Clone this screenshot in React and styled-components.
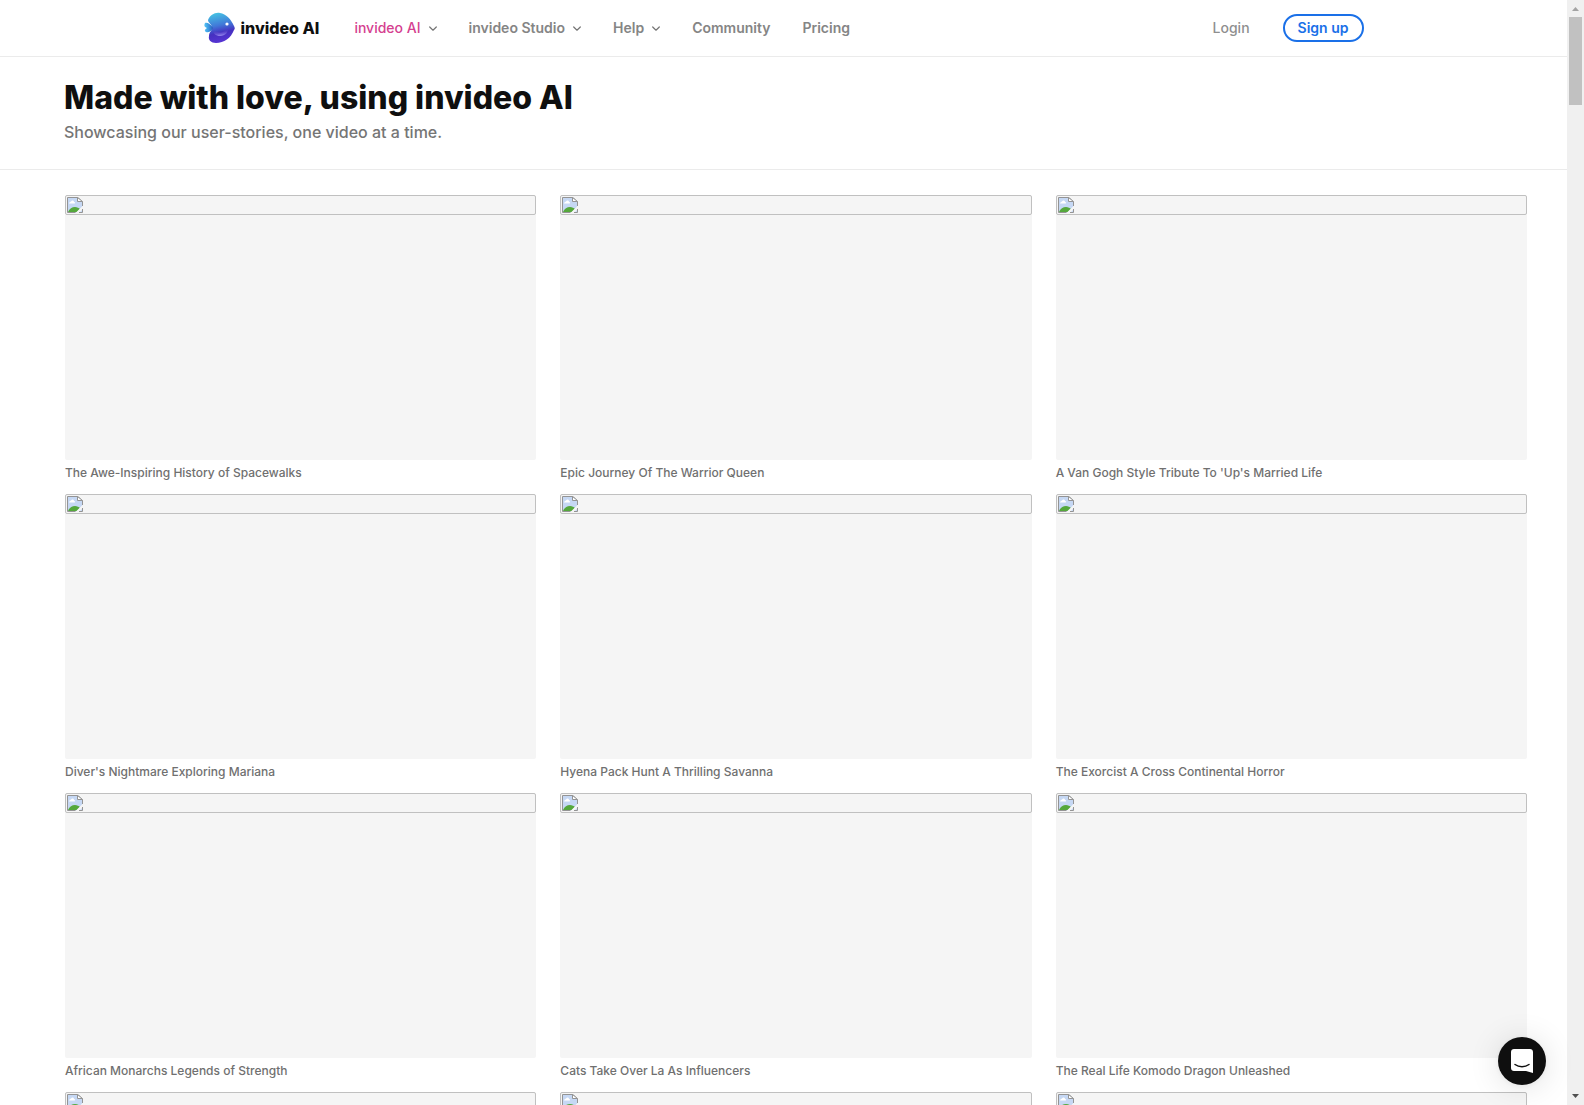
import styled, { createGlobalStyle } from "styled-components";

const menu = [
    { label: "invideo AI", drop: true, active: true },
    { label: "invideo Studio", drop: true },
    { label: "Help", drop: true },
    { label: "Community" },
    { label: "Pricing" },
];

const videos = [
    "The Awe-Inspiring History of Spacewalks",
    "Epic Journey Of The Warrior Queen",
    "A Van Gogh Style Tribute To 'Up's Married Life",
    "Diver's Nightmare Exploring Mariana",
    "Hyena Pack Hunt A Thrilling Savanna",
    "The Exorcist A Cross Continental Horror",
    "African Monarchs Legends of Strength",
    "Cats Take Over La As Influencers",
    "The Real Life Komodo Dragon Unleashed",
    "",
    "",
    "",
];

function FishLogo() {
    return (
        <svg width="31" height="32" viewBox="0 0 31 32" aria-hidden="true">
            <defs>
                <linearGradient id="body" x1="0.4" y1="0" x2="0.6" y2="1">
                    <stop offset="0" stopColor="#45bfe2" />
                    <stop offset="0.4" stopColor="#4178d8" />
                    <stop offset="0.65" stopColor="#4530c0" />
                    <stop offset="1" stopColor="#5a35d6" />
                </linearGradient>
                <linearGradient id="fin" x1="0.3" y1="0" x2="0.5" y2="1">
                    <stop offset="0.3" stopColor="#4530c0" stopOpacity="0" />
                    <stop offset="1" stopColor="#9a8df0" />
                </linearGradient>
                <linearGradient id="tail" x1="0" y1="0" x2="1" y2="0">
                    <stop offset="0" stopColor="#55c4f4" />
                    <stop offset="0.5" stopColor="#3b96e0" />
                    <stop offset="1" stopColor="#2b58b8" />
                </linearGradient>
            </defs>
            <path d="M4 8C6 3 11 0 16 1C22 2 27 7 30 14C31 16 31 17 30 18C27 26 20 31 12 31C7 31 4 28 5 24C5 20 8 19 8 16C8 12 4 11 4 8Z" fill="url(#body)" />
            <path d="M1 11C3 10 7 12 9 16C7 20 4 21 2 20C0 19 1 17 3 16C0 15 0 13 1 11Z" fill="url(#tail)" />
            <path d="M9 17C13 22 20 22 24 15C25 20 21 24 16 24C12 24 9 22 9 17Z" fill="url(#fin)" />
            <circle cx="23" cy="12" r="1.6" fill="#fff" />
        </svg>
    );
}

function Chevron() {
    return (
        <svg width="8" height="8" viewBox="0 0 8 8" fill="none" stroke="#757575" strokeWidth="1.2" strokeLinecap="round" strokeLinejoin="round" aria-hidden="true">
            <path d="M0.7 3L4 6.2L7.3 3" />
        </svg>
    );
}

function MissingImage() {
    return (
        <svg width="16" height="16" viewBox="0 0 16 16" aria-hidden="true">
            <path d="M0.5 0.5H11L15.5 5V15.5H0.5Z" fill="#c6d8f4" />
            <path d="M2 6.5C2 5 3.5 5 4 4.5C5 3 7 3.5 7 5C8.5 5 8.5 6.5 7.5 6.5Z" fill="#fff" />
            <path d="M1 15C2.5 11.5 5 10 8 10C10 10 12 11 13 12L10 15Z" fill="#55a83c" />
            <path d="M16 8.5L8.5 16H12L16 12Z" fill="#f5f5f5" />
            <path d="M8.5 15.5H0.5V0.5H11L15.5 5V9M12 15.5H15.5V12" fill="none" stroke="#949494" />
            <path d="M10.5 0.5V4.5H15.5Z" fill="#fff" stroke="#949494" />
        </svg>
    );
}

function Card({ title }) {
    return (
        <Figure>
            <Thumb>
                <Broken><MissingImage /></Broken>
            </Thumb>
            <Caption>{title}</Caption>
        </Figure>
    );
}

export default function App() {
    return (
        <Screen>
            <GlobalStyle />
            <Page>
                <Header>
                    <Bar>
                        <Brand href="#">
                            <FishLogo />
                            <BrandName>invideo AI</BrandName>
                        </Brand>
                        <Nav>
                            {menu.map((item) =>
                                item.drop ? (
                                    <NavButton key={item.label} type="button" $active={item.active}>
                                        {item.label}
                                        <Chevron />
                                    </NavButton>
                                ) : (
                                    <NavLink key={item.label} href="#">{item.label}</NavLink>
                                )
                            )}
                        </Nav>
                        <Login href="#">Login</Login>
                        <SignUp type="button">Sign up</SignUp>
                    </Bar>
                </Header>
                <Intro>
                    <Title>Made with love, using invideo AI</Title>
                    <Subtitle>Showcasing our user-stories, one video at a time.</Subtitle>
                </Intro>
                <Gallery>
                    {videos.map((title, index) => (
                        <Card key={index} title={title} />
                    ))}
                </Gallery>
            </Page>
            <ScrollTrack aria-hidden="true">
                <ScrollArrow viewBox="0 0 17 17"><path d="M5 11L8.5 7L12 11Z" fill="#a3a3a3" /></ScrollArrow>
                <ScrollThumb />
                <ScrollArrow viewBox="0 0 17 17"><path d="M5 6L8.5 10L12 6Z" fill="#505050" /></ScrollArrow>
            </ScrollTrack>
            <ChatButton type="button" aria-label="Open chat">
                <svg width="24" height="26" viewBox="0 0 24 26" aria-hidden="true">
                    <path d="M4 1H20C21.7 1 23 2.3 23 4V25L16 23H4C2.3 23 1 21.7 1 20V4C1 2.3 2.3 1 4 1Z" fill="#fff" />
                    <path d="M5 16.5C9 19.5 15 19.5 19 16.5" fill="none" stroke="#0f0f0f" strokeWidth="1.5" strokeLinecap="round" />
                </svg>
            </ChatButton>
        </Screen>
    );
}

const GlobalStyle = createGlobalStyle`
    * {
        box-sizing: border-box;
    }
    body {
        margin: 0;
        background: white;
        font-family: Inter, "Liberation Sans", sans-serif;
    }
    a {
        text-decoration: none;
    }
    button {
        font-family: inherit;
        cursor: pointer;
    }
`

const Screen = styled.div`
    display: flex;
    height: 100vh;
    overflow: hidden;
`

const Page = styled.div`
    flex: 1;
    min-width: 0;
    overflow: hidden;
`

const Header = styled.header`
    border-bottom: 1px solid #ebebeb;
`

const Bar = styled.div`
    display: flex;
    align-items: center;
    max-width: 1160px;
    height: 56px;
    margin: 0 auto;
`

const Brand = styled.a`
    display: flex;
    align-items: center;
    gap: 6px;
    color: #0f0f0f;
`

const BrandName = styled.span`
    font-size: 16px;
    font-weight: 800;
    line-height: 20px;
`

const Nav = styled.nav`
    display: flex;
    align-items: center;
    gap: 32px;
    margin-left: 35px;
`

const NavButton = styled.button`
    display: flex;
    align-items: center;
    gap: 8px;
    padding: 0;
    border: none;
    background: none;
    font-size: 14px;
    font-weight: ${({ $active }) => ($active ? 500 : 600)};
    line-height: 20px;
    color: ${({ $active }) => ($active ? "#d5408f" : "#858585")};
`

const NavLink = styled.a`
    font-size: 14px;
    font-weight: 600;
    line-height: 20px;
    color: #858585;
`

const Login = styled.a`
    margin-left: auto;
    font-size: 14px;
    font-weight: 500;
    line-height: 20px;
    color: #8f8f8f;
`

const SignUp = styled.button`
    height: 28px;
    margin-left: 33px;
    padding: 0 13px;
    border: 2px solid #1a70e8;
    border-radius: 14px;
    background: white;
    font-size: 14px;
    font-weight: 600;
    line-height: 20px;
    color: #1a70e8;
`

const Intro = styled.section`
    padding: 21px 40px 25px 64px;
    border-bottom: 1px solid #ebebeb;
`

const Title = styled.h1`
    margin: 0;
    font-size: 32px;
    font-weight: 800;
    line-height: 40px;
    color: #0f0f0f;
`

const Subtitle = styled.p`
    margin: 2px 0 0;
    font-size: 16px;
    font-weight: 500;
    line-height: 24px;
    color: #757575;
`

const Gallery = styled.main`
    display: grid;
    grid-template-columns: repeat(3, 1fr);
    column-gap: 24px;
    padding: 25px 40px 25px 65px;
`

const Figure = styled.figure`
    margin: 0;
`

const Thumb = styled.div`
    aspect-ratio: 16 / 9;
    border-radius: 2px;
    background: #f5f5f5;
`

const Broken = styled.div`
    height: 20px;
    padding: 1px;
    border: 1px solid #c0c0c0;
    border-radius: 2px;
    line-height: 0;
`

const Caption = styled.figcaption`
    height: 34px;
    padding-top: 4px;
    font-size: 12px;
    font-weight: 500;
    line-height: 18px;
    color: #707070;
`

const ScrollTrack = styled.div`
    display: flex;
    flex-direction: column;
    width: 17px;
    background: #f0f0f0;
`

const ScrollArrow = styled.svg`
    width: 17px;
    height: 17px;
`

const ScrollThumb = styled.div`
    height: 88px;
    margin: 0 2px auto;
    background: #c1c1c1;
`

const ChatButton = styled.button`
    position: fixed;
    right: 38px;
    bottom: 20px;
    display: flex;
    align-items: center;
    justify-content: center;
    width: 48px;
    height: 48px;
    padding: 0;
    border: none;
    border-radius: 50%;
    background: #0f0f0f;
    box-shadow: 0 1px 6px rgba(0, 0, 0, 0.06), 0 2px 32px rgba(0, 0, 0, 0.12);
`
